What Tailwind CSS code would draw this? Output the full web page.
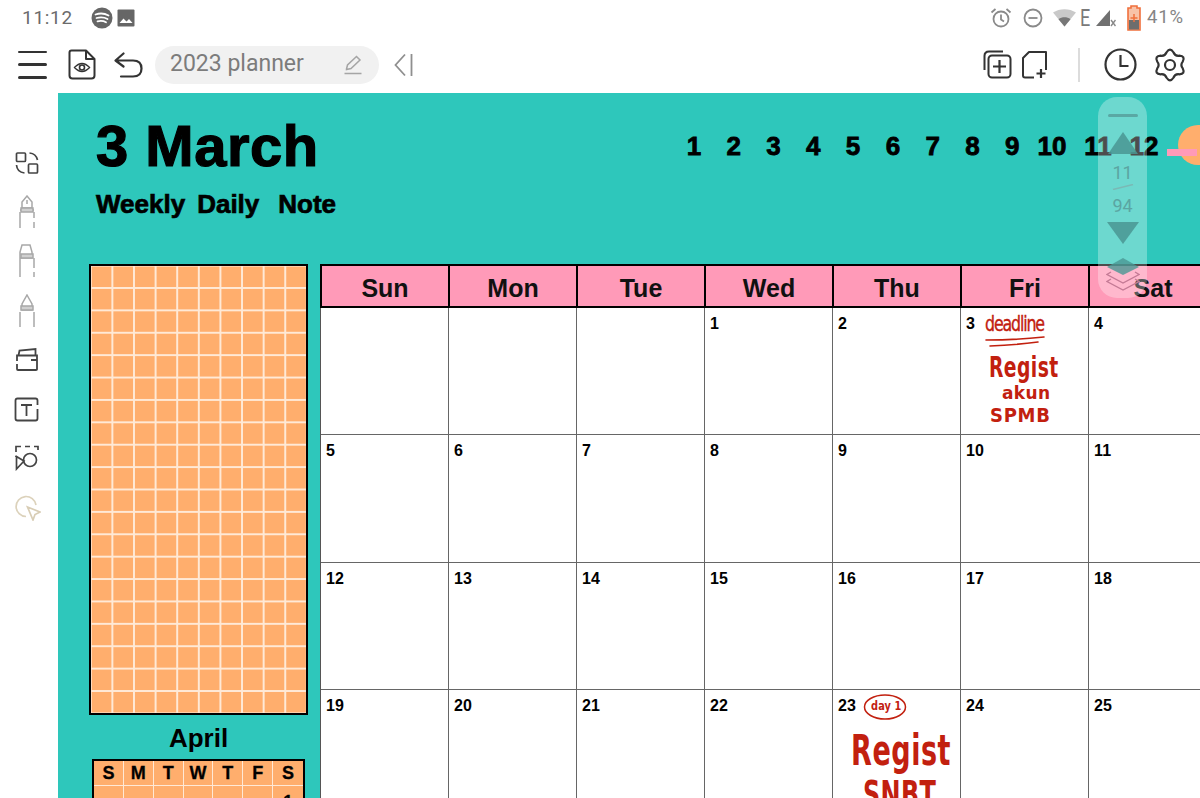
<!DOCTYPE html>
<html lang="en">
<head>
    <meta charset="UTF-8">
    <title>2023 planner</title>
    <script src="https://cdn.jsdelivr.net/npm/@tailwindcss/browser@4"></script>
</head>
<body class="w-[1200px] h-[798px] overflow-hidden bg-white flex flex-col font-['Roboto',sans-serif]">
    <!-- status bar -->
    <div class="h-[36px] flex items-center text-[#6b6b6b] pl-[22px] pr-[16px] shrink-0">
        <span class="text-[19px] tracking-[0.7px] w-[68px]">11:12</span>
        <svg class="w-[22px] h-[22px] ml-[1px]" viewBox="0 0 22 22"><circle cx="11" cy="11" r="10.5" fill="#666"/><path d="M4.5 7.5C9 6 14 6.5 17.5 8.5M5.5 11C9.5 10 13.5 10.3 16.5 12M6.5 14.3C9.5 13.5 12.5 13.8 15 15.2" fill="none" stroke="#fff" stroke-width="1.8" stroke-linecap="round"/></svg>
        <svg class="w-[18px] h-[18px] ml-[4px]" viewBox="0 0 18 18"><rect x="0.5" y="0.5" width="17" height="17" rx="1" fill="#666"/><path d="M2.5 14L6.5 9.5L9.5 12.5L12 10L15.5 14Z" fill="#fff"/></svg>
        <div class="ml-auto flex items-center">
            <svg class="w-[22px] h-[22px]" viewBox="0 0 22 22" fill="none" stroke="#8a8a8a" stroke-width="1.8"><circle cx="11" cy="12" r="7.5"/><path d="M11 7.5V12.5L14 14.5M1.5 5.5L5.5 2M20.5 5.5L16.5 2"/></svg>
            <svg class="w-[20px] h-[20px] ml-[11px]" viewBox="0 0 20 20" fill="none" stroke="#8a8a8a" stroke-width="1.8"><circle cx="10" cy="10" r="8.5"/><path d="M5.5 10H14.5"/></svg>
            <svg class="w-[23px] h-[18px] ml-[10px]" viewBox="0 0 23 18"><path d="M0 3.5C6.5 -1 16.5 -1 23 3.5L11.5 17.5Z" fill="#c9c9c9"/><path d="M5.5 10.2C9 7.6 14 7.6 17.5 10.2L11.5 17.5Z" fill="#777"/></svg>
            <span class="text-[24px] leading-none ml-[4px] w-[12px] text-[#7a7a7a] origin-left scale-x-[0.75]">E</span>
            <svg class="w-[20px] h-[18px] ml-[4px]" viewBox="0 0 20 18"><path d="M0 17L14 1V17Z" fill="#707070"/><path d="M15 11L19.5 17M19.5 11L15 17" stroke="#888" stroke-width="1.4"/></svg>
            <svg class="w-[14px] h-[26px] ml-[11px]" viewBox="0 0 14 26"><path d="M4 1H10V3H13V25H1V3H4Z" fill="#f8c2a8" stroke="#f0703c" stroke-width="1.6"/><rect x="2" y="15" width="10" height="9.5" fill="#6d6d6d"/><path d="M7 9V17M3.5 13H10.5" stroke="#f0703c" stroke-width="1.5"/></svg>
            <span class="text-[18.5px] tracking-[0.9px] ml-[6px] text-[#858585]">41%</span>
        </div>
    </div>

    <!-- toolbar -->
    <div class="h-[57px] flex items-center pl-[18px] pr-[14px] shrink-0 text-[#333]">
        <div class="w-[29px] h-[28px] flex flex-col justify-between">
            <div class="h-[2.5px] bg-[#333] rounded-full"></div>
            <div class="h-[2.5px] bg-[#333] rounded-full"></div>
            <div class="h-[2.5px] bg-[#333] rounded-full"></div>
        </div>
        <svg class="w-[28px] h-[31px] ml-[21px]" viewBox="0 0 28 31" fill="none" stroke="#333" stroke-width="2" stroke-linejoin="round"><path d="M3.5 1.5H18L26.5 10V26.5Q26.5 29.5 23.5 29.5H4.5Q1.5 29.5 1.5 26.5V3.5Q1.5 1.5 3.5 1.5Z"/><path d="M18 1.5V10H26.5"/><path d="M6.5 18.5Q14 10.5 21.5 18.5Q14 26.5 6.5 18.5Z" stroke-width="1.6"/><circle cx="14" cy="18.5" r="2.5" stroke-width="1.6"/></svg>
        <svg class="w-[29px] h-[26px] ml-[18px]" viewBox="0 0 29 26" fill="none" stroke="#333" stroke-width="2.2" stroke-linecap="round" stroke-linejoin="round"><path d="M9.5 1.5L1.5 8.5L9.5 14.5M2.5 8.5H19Q27.5 8.5 27.5 16.5Q27.5 24.5 19 24.5H7"/></svg>
        <div class="ml-[12px] w-[224px] h-[38px] rounded-full bg-[#f1f1f1] flex items-center pl-[15px] pr-[17px]">
            <span class="text-[23px] text-[#7c7c7c]">2023 planner</span>
            <svg class="ml-auto w-[18px] h-[20px]" viewBox="0 0 18 20" fill="none" stroke="#a5a5a5" stroke-width="1.5"><path d="M2.5 14L3.5 10L12.5 1.5L16 5L7 13.5L2.5 14.5ZM0.5 18.5H17.5"/></svg>
        </div>
        <svg class="w-[19px] h-[24px] ml-[15px]" viewBox="0 0 19 24" fill="none" stroke="#8f8f8f" stroke-width="1.8"><path d="M11 1.5L1.5 12L11 22.5M17.5 1V23"/></svg>
        <div class="ml-auto flex items-center">
            <svg class="w-[29px] h-[29px]" viewBox="0 0 29 29" fill="none" stroke="#333" stroke-width="2"><path d="M1.5 20V6Q1.5 1.5 6 1.5H20"/><rect x="5.5" y="5.5" width="22" height="22" rx="3.5"/><path d="M16.5 10V23M10 16.5H23" stroke-width="2.2"/></svg>
            <svg class="w-[25px] h-[28px] ml-[10px]" viewBox="0 0 25 28" fill="none" stroke="#333" stroke-width="2" stroke-linejoin="round"><path d="M12 26.5H3Q1 26.5 1 24.5V7L7 1H24V19"/><path d="M19 18V27M14.5 22.5H23.5" stroke-width="2.2"/></svg>
            <div class="w-[2px] h-[34px] bg-[#dcdcdc] ml-[31px]"></div>
            <svg class="w-[33px] h-[33px] ml-[24px]" viewBox="0 0 33 33" fill="none" stroke="#333" stroke-width="2.2"><circle cx="16.5" cy="16.5" r="15"/><path d="M16.5 7V18H24.5"/></svg>
            <svg class="w-[32px] h-[32px] ml-[17px] overflow-visible" viewBox="0 0 32 32" fill="none" stroke="#333" stroke-width="2.2" stroke-linejoin="round"><path d="M12.6 3.25Q16 -2 19.4 3.25Q21 7.3 25.3 6.7Q31.6 7 28.75 12.6Q26 16 28.75 19.4Q31.6 25 25.3 25.3Q21 24.7 19.4 28.75Q16 34 12.6 28.75Q11 24.7 6.7 25.3Q.4 25 3.25 19.4Q6 16 3.25 12.6Q.4 7 6.7 6.7Q11 7.3 12.6 3.25Z"/><circle cx="16" cy="16" r="5"/></svg>
        </div>
    </div>

    <div class="flex flex-1 min-h-0">
        <!-- left rail -->
        <div class="w-[58px] shrink-0 relative">
            <div class="absolute left-[15px] top-[59px] flex flex-col items-start">
                <svg class="w-[24px] h-[22px]" viewBox="0 0 24 22" fill="none" stroke="#444" stroke-width="1.7"><rect x="1.5" y="1" width="9" height="8.5" rx="1"/><rect x="13.5" y="12" width="9" height="9" rx="1"/><path d="M14.5 1Q21 1.5 22.5 8M1.5 13Q2 20 9.5 21"/></svg>
                <svg class="w-[16px] h-[34px] ml-[4px] mt-[21px]" viewBox="0 0 16 34" fill="none" stroke="#a8a8a8" stroke-width="1.5"><path d="M8 1L13 7V13H3V7ZM8 5V9M1 17V33M15 17V23M15 27V33M1 15H15" /><rect x="2" y="13" width="12" height="4" fill="#d0d0d0"/></svg>
                <svg class="w-[16px] h-[34px] ml-[4px] mt-[15px]" viewBox="0 0 16 34" fill="none" stroke="#a8a8a8" stroke-width="1.5"><path d="M3 1H11L13 8V14H1V8ZM1 14V33M15 14V24M15 28V33"/><rect x="2" y="10" width="12" height="4" fill="#d0d0d0"/></svg>
                <svg class="w-[16px] h-[34px] ml-[4px] mt-[16px]" viewBox="0 0 16 34" fill="none" stroke="#a8a8a8" stroke-width="1.5"><path d="M8 1L13 10V16H3V10ZM1 18V33M15 18V33"/><rect x="2" y="12" width="12" height="4" fill="#d0d0d0"/></svg>
                <svg class="w-[22px] h-[23px] ml-[1px] mt-[20px]" viewBox="0 0 22 23" fill="none" stroke="#444" stroke-width="1.8"><path d="M2.5 7.5L3.5 2.5L19.5 1V7.5"/><path d="M1 13V7.5H21V21.5Q21 22 20 22H2Q1 22 1 21V16M15 12H21"/></svg>
                <svg class="w-[25px] h-[25px] mt-[26px] -ml-[1px]" viewBox="0 0 25 25" fill="none" stroke="#444" stroke-width="1.8"><path d="M23.5 8V3.5Q23.5 1.5 21.5 1.5H3.5Q1.5 1.5 1.5 3.5V21.5Q1.5 23.5 3.5 23.5H21.5Q23.5 23.5 23.5 21.5V12M7 8H18M12.5 8V19"/></svg>
                <svg class="w-[24px] h-[26px] mt-[23px]" viewBox="0 0 24 26" fill="none" stroke="#444" stroke-width="1.7"><path d="M1 7V1.5H6M10 1.5H15M19 1.5H23V5M1 11V12"/><circle cx="15" cy="15" r="6.5"/><path d="M9 16L1.5 11.5V24Z"/></svg>
                <svg class="w-[26px] h-[26px] mt-[24px]" viewBox="0 0 26 26" fill="none" stroke="#dcd2bb" stroke-width="1.7"><path d="M11 21.5A10 10 0 1 1 21 10"/><path d="M12.5 12L25 17L20 19.5L18 25Z" stroke="#d8cdb5"/></svg>
            </div>
        </div>

        <!-- planner page -->
        <div class="flex-1 relative bg-[#2ec7bb] overflow-hidden text-black font-['Liberation_Sans',Arial,sans-serif] font-bold">
            <div class="h-[171px] relative">
                <div class="flex items-start">
                    <div class="pl-[38px] pt-[20px]">
                        <div class="text-[58px] leading-[66px] [-webkit-text-stroke:1.2px_#000] tracking-[0.5px]">3 March</div>
                        <div class="flex text-[26px] leading-[30px] mt-[10px] [-webkit-text-stroke:0.7px_#000]">
                            <span>Weekly</span><span class="ml-[12px]">Daily</span><span class="ml-[19px]">Note</span>
                        </div>
                    </div>
                    <div class="absolute left-[616px] top-[37px] flex text-[26px] leading-[32px] text-center [-webkit-text-stroke:0.8px_#000]">
                        <span class="w-[39.8px]">1</span><span class="w-[39.8px]">2</span><span class="w-[39.8px]">3</span><span class="w-[39.8px]">4</span><span class="w-[39.8px]">5</span><span class="w-[39.8px]">6</span><span class="w-[39.8px]">7</span><span class="w-[39.8px]">8</span><span class="w-[39.8px]">9</span><span class="w-[39.8px]">10</span><span class="w-[46px] ml-[3px]">11</span><span class="w-[46px]">12</span>
                    </div>
                </div>
                <div class="absolute left-[1120px] top-[32px] w-[40px] h-[40px] rounded-full bg-[#ffae6d]"></div>
                <div class="absolute left-[1109px] top-[56px] w-[30px] h-[7px] bg-[#ff9ab8]"></div>
            </div>

            <div class="flex items-start pl-[31px]">
                <!-- notes and mini calendar -->
                <div class="w-[219px] shrink-0">
                    <div class="h-[451px] border-2 border-black bg-[#ffae6d] bg-[linear-gradient(#ffe9d6_1.5px,transparent_1.5px),linear-gradient(90deg,#ffe9d6_1.5px,transparent_1.5px)] bg-[size:21.62px_22.4px] bg-[position:20.4px_21px]"></div>
                    <div class="text-[26px] leading-[30px] text-center font-bold mt-[8px]">April</div>
                    <div class="ml-[3px] mt-[6px] w-[213px] border-2 border-black bg-[#ffae6d] text-[18px] text-center [-webkit-text-stroke:0.3px_#000]">
                        <div class="grid grid-cols-7 h-[25px] leading-[25px] border-b border-[#ffe9d6]">
                            <span class="border-r border-[#ffe9d6]">S</span><span class="border-r border-[#ffe9d6]">M</span><span class="border-r border-[#ffe9d6]">T</span><span class="border-r border-[#ffe9d6]">W</span><span class="border-r border-[#ffe9d6]">T</span><span class="border-r border-[#ffe9d6]">F</span><span>S</span>
                        </div>
                        <div class="grid grid-cols-7 h-[25px] leading-[25px] text-[17px]">
                            <span class="border-r border-[#ffe9d6]"></span><span class="border-r border-[#ffe9d6]"></span><span class="border-r border-[#ffe9d6]"></span><span class="border-r border-[#ffe9d6]"></span><span class="border-r border-[#ffe9d6]"></span><span class="border-r border-[#ffe9d6]"></span><span class="pt-[3px]">1</span>
                        </div>
                    </div>
                </div>

                <!-- month calendar -->
                <div class="ml-[12px] w-[898px] shrink-0">
                    <div class="grid grid-cols-[repeat(7,128px)] grid-rows-[40px] h-[44px] bg-[#ff9ab8] border-y-2 border-l-2 border-black text-[25px] leading-[44px] text-center font-bold text-[#111]">
                        <div class="border-r-2 border-black">Sun</div><div class="border-r-2 border-black">Mon</div><div class="border-r-2 border-black">Tue</div><div class="border-r-2 border-black">Wed</div><div class="border-r-2 border-black">Thu</div><div class="border-r-2 border-black">Fri</div><div class="border-r-2 border-black">Sat</div>
                    </div>
                    <div class="grid grid-cols-[repeat(7,128px)] auto-rows-[127.4px] bg-white border-l border-[#555] text-[16px] leading-[18px] tracking-[0.2px]">
                        <div class="border-r border-b border-[#666] pl-[5px] pt-[7px]"></div>
                        <div class="border-r border-b border-[#666] pl-[5px] pt-[7px]"></div>
                        <div class="border-r border-b border-[#666] pl-[5px] pt-[7px]"></div>
                        <div class="border-r border-b border-[#666] pl-[5px] pt-[7px]">1</div>
                        <div class="border-r border-b border-[#666] pl-[5px] pt-[7px]">2</div>
                        <div class="relative border-r border-b border-[#666] pl-[5px] pt-[7px]">3
                            <div class="absolute left-[24px] top-[3px] text-[22px] leading-[26px] font-['DejaVu_Sans',sans-serif] font-normal origin-left scale-x-[0.72] text-[#c2200f] tracking-[-1.6px] [-webkit-text-stroke:0.4px_#c2200f]">deadline</div>
                            <svg class="absolute left-[24px] top-[26px] w-[62px] h-[14px]" viewBox="0 0 62 14" fill="none" stroke="#c2200f" stroke-width="1.6" stroke-linecap="round"><path d="M1 6Q30 6 59 3M5 12Q30 11 53 8"/></svg>
                            <div class="absolute left-[28px] top-[45px] text-[28px] leading-[30px] font-['DejaVu_Sans',sans-serif] origin-left scale-x-[0.67] text-[#c2200f] tracking-[0.6px]">Regist</div>
                            <div class="absolute left-[41px] top-[75px] text-[17px] leading-[20px] font-['DejaVu_Sans',sans-serif] text-[#c2200f] tracking-[0.4px]">akun</div>
                            <div class="absolute left-[29px] top-[97px] text-[20px] leading-[20px] font-['DejaVu_Sans',sans-serif] origin-left scale-x-[0.9] text-[#c2200f] tracking-[0.8px]">SPMB</div>
                        </div>
                        <div class="border-r border-b border-[#666] pl-[5px] pt-[7px]">4</div>

                        <div class="border-r border-b border-[#666] pl-[5px] pt-[7px]">5</div>
                        <div class="border-r border-b border-[#666] pl-[5px] pt-[7px]">6</div>
                        <div class="border-r border-b border-[#666] pl-[5px] pt-[7px]">7</div>
                        <div class="border-r border-b border-[#666] pl-[5px] pt-[7px]">8</div>
                        <div class="border-r border-b border-[#666] pl-[5px] pt-[7px]">9</div>
                        <div class="border-r border-b border-[#666] pl-[5px] pt-[7px]">10</div>
                        <div class="border-r border-b border-[#666] pl-[5px] pt-[7px]">11</div>

                        <div class="border-r border-b border-[#666] pl-[5px] pt-[7px]">12</div>
                        <div class="border-r border-b border-[#666] pl-[5px] pt-[7px]">13</div>
                        <div class="border-r border-b border-[#666] pl-[5px] pt-[7px]">14</div>
                        <div class="border-r border-b border-[#666] pl-[5px] pt-[7px]">15</div>
                        <div class="border-r border-b border-[#666] pl-[5px] pt-[7px]">16</div>
                        <div class="border-r border-b border-[#666] pl-[5px] pt-[7px]">17</div>
                        <div class="border-r border-b border-[#666] pl-[5px] pt-[7px]">18</div>

                        <div class="border-r border-[#666] pl-[5px] pt-[7px]">19</div>
                        <div class="border-r border-[#666] pl-[5px] pt-[7px]">20</div>
                        <div class="border-r border-[#666] pl-[5px] pt-[7px]">21</div>
                        <div class="border-r border-[#666] pl-[5px] pt-[7px]">22</div>
                        <div class="relative border-r border-[#666] pl-[5px] pt-[7px]">23
                            <svg class="absolute left-[30px] top-[3px] w-[44px] h-[28px]" viewBox="0 0 44 28" fill="none" stroke="#c2200f" stroke-width="1.5"><ellipse cx="22" cy="14" rx="20.5" ry="12"/></svg>
                            <div class="absolute left-[38px] top-[7px] text-[13px] leading-[18px] font-['DejaVu_Sans',sans-serif] origin-left scale-x-[0.75] text-[#c2200f]">day 1</div>
                            <div class="absolute left-[18px] top-[40px] text-[42px] leading-[42px] font-['DejaVu_Sans',sans-serif] origin-left scale-x-[0.645] text-[#c2200f] tracking-[0.8px]">Regist</div>
                            <div class="absolute left-[30px] top-[85px] text-[38px] leading-[38px] font-['DejaVu_Sans',sans-serif] origin-left scale-x-[0.63] text-[#c2200f] tracking-[0.5px]">SNBT</div>
                        </div>
                        <div class="border-r border-[#666] pl-[5px] pt-[7px]">24</div>
                        <div class="border-r border-[#666] pl-[5px] pt-[7px]">25</div>
                    </div>
                </div>
            </div>

            <!-- floating page scroller -->
            <div class="absolute left-[1040px] top-[4px] w-[49px] h-[201px] rounded-[19px] bg-white/30 flex flex-col items-center font-['Roboto',sans-serif] font-normal text-[#5ba5a2]">
                <div class="w-[30px] h-[3px] mt-[17px] rounded-full bg-[#5aa8a4]"></div>
                <svg class="w-[30px] h-[22px] mt-[15px]" viewBox="0 0 30 22"><path d="M15 0L30 22H0Z" fill="#4a9793" fill-opacity="0.85"/></svg>
                <div class="text-[18px] leading-[20px] mt-[9px]">11</div>
                <svg class="w-[22px] h-[6px] mt-[1px]" viewBox="0 0 22 6"><path d="M1 5.5L21 0.5" stroke="#7ab9b5" stroke-width="1.5"/></svg>
                <div class="text-[18px] leading-[20px] mt-[6px]">94</div>
                <svg class="w-[32px] h-[22px] mt-[6px]" viewBox="0 0 32 22"><path d="M0 0H32L16 22Z" fill="#4a9793" fill-opacity="0.85"/></svg>
                <svg class="w-[34px] h-[33px] mt-[14px]" viewBox="0 0 34 33"><path d="M17 0L33 9L17 17L1 9Z" fill="#4a9793" fill-opacity="0.8"/><path d="M5 14L1 16.5L17 25L33 16.5L29 14M5 21L1 23.5L17 32L33 23.5L29 21" fill="none" stroke="#c47a95" stroke-width="1.4"/></svg>
            </div>
        </div>
    </div>
</body>
</html>
